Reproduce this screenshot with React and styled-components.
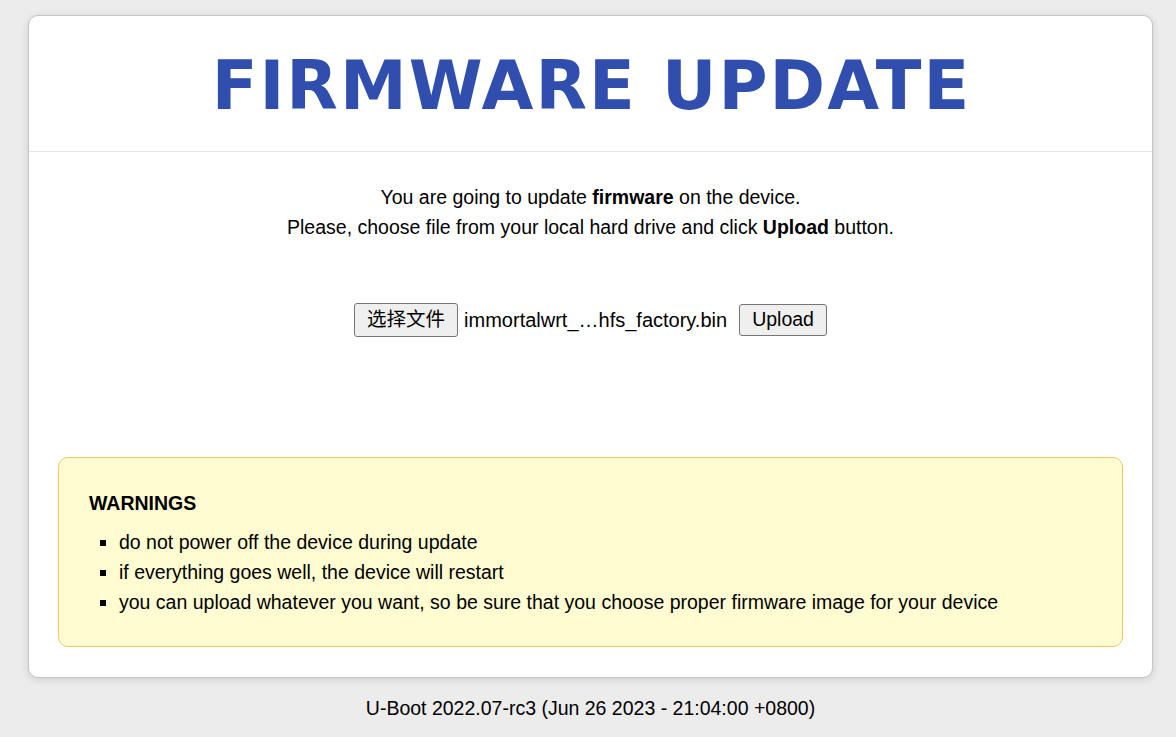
import React from 'react';
import styled, { createGlobalStyle } from 'styled-components';

const Global = createGlobalStyle`
  html, body {
    margin: 0;
    padding: 0;
    background: #ececec;
    font-family: "Liberation Sans", Arial, sans-serif;
    color: #000;
  }
`;

const Page = styled.div`
  padding: 15px 23px 0 28px;
`;

const Card = styled.div`
  background: #fff;
  border: 1px solid #c4c4c4;
  border-radius: 10px;
  box-shadow: 0 2px 8px rgba(0, 0, 0, 0.12);
  height: 663px;
  box-sizing: border-box;
  display: flex;
  flex-direction: column;
`;

const Header = styled.div`
  height: 136px;
  padding-top: 4px;
  border-bottom: 1px solid #e3e3e3;
  display: flex;
  align-items: center;
  justify-content: center;
  box-sizing: border-box;
`;

const Title = styled.h1`
  margin: 0;
  font-family: "DejaVu Sans", sans-serif;
  font-weight: bold;
  font-size: 67px;
  color: #304ead;
  letter-spacing: 2px;
  margin-left: 2px;
`;

const Intro = styled.div`
  text-align: center;
  font-size: 19.5px;
  line-height: 30px;
  padding-top: 30px;
`;

const FileRow = styled.div`
  display: flex;
  align-items: center;
  justify-content: center;
  margin-top: 60px;
  height: 36px;
`;

const Btn = styled.button`
  font-family: "Liberation Sans", "Noto Sans CJK SC", sans-serif;
  font-size: 19.5px;
  background: #efefef;
  border: 1px solid #767676;
  border-radius: 3px;
  color: #000;
  padding: 0 12px;
  height: ${p => p.$h}px;
  line-height: 1;
`;

const FileName = styled.span`
  font-size: 20px;
  margin: 0 12px 0 6px;
`;

const Warn = styled.div`
  margin: 119px 29px 0 29px;
  background: #fffcd1;
  border: 1px solid #f3c85a;
  border-radius: 10px;
  padding: 34px 30px 29px 30px;
`;

const WarnTitle = styled.div`
  font-weight: bold;
  font-size: 19.5px;
  line-height: 22px;
  margin-bottom: 13px;
`;

const List = styled.ul`
  margin: 0;
  padding-left: 30px;
  list-style: square;
  font-size: 19.5px;
  line-height: 30px;
`;

const Footer = styled.div`
  text-align: center;
  font-size: 19.5px;
  padding-top: 19px;
`;

export default function App() {
  return (
    <>
      <Global />
      <Page>
        <Card>
          <Header>
            <Title>FIRMWARE UPDATE</Title>
          </Header>
          <Intro>
            You are going to update <b>firmware</b> on the device.
            <br />
            Please, choose file from your local hard drive and click <b>Upload</b> button.
          </Intro>
          <FileRow>
            <Btn $h={34}>选择文件</Btn>
            <FileName>immortalwrt_…hfs_factory.bin</FileName>
            <Btn $h={32}>Upload</Btn>
          </FileRow>
          <Warn>
            <WarnTitle>WARNINGS</WarnTitle>
            <List>
              <li>do not power off the device during update</li>
              <li>if everything goes well, the device will restart</li>
              <li>you can upload whatever you want, so be sure that you choose proper firmware image for your device</li>
            </List>
          </Warn>
        </Card>
        <Footer>U-Boot 2022.07-rc3 (Jun 26 2023 - 21:04:00 +0800)</Footer>
      </Page>
    </>
  );
}
